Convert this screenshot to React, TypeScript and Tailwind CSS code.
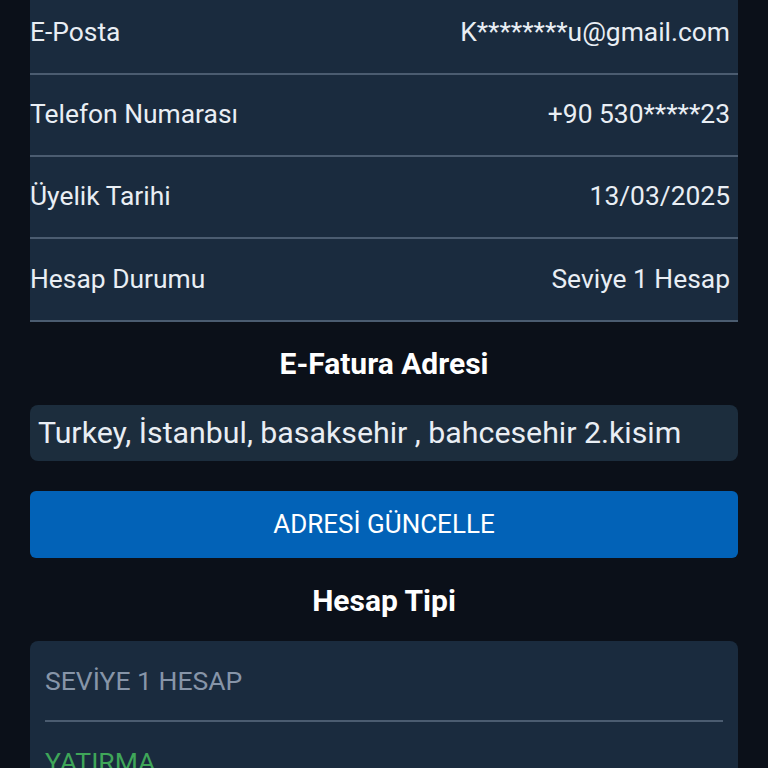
const ROWS = [
  { label: 'E-Posta', value: 'K********u@gmail.com' },
  { label: 'Telefon Numarası', value: '+90 530*****23' },
  { label: 'Üyelik Tarihi', value: '13/03/2025' },
  { label: 'Hesap Durumu', value: 'Seviye 1 Hesap' },
]

export default function App() {
  return (
    <div
      className="w-[768px] h-[768px] overflow-hidden bg-[#0b1019] px-[30px] text-white"
      style={{ fontFamily: 'Roboto, "Noto Sans", sans-serif' }}
    >
      {/* profile info */}
      <div className="-mt-[7px] bg-[#1a2b3e]">
        {ROWS.map((r) => (
          <div
            key={r.label}
            className="h-[82px] last:h-[83px] flex items-center justify-between pr-[8px] border-b-2 border-[#4b5c70] text-[26.4px] text-[#e9eef4]"
          >
            <span>{r.label}</span>
            <span>{r.value}</span>
          </div>
        ))}
      </div>

      <h2 className="mt-[22px] text-center text-[30px] font-bold leading-[40px]">E-Fatura Adresi</h2>

      <div className="mt-[21px] h-[56px] rounded-[8px] bg-[#1c2d3d] px-[8px] flex items-center text-[30.3px] text-[#e9eef4]">
        Turkey, İstanbul, basaksehir , bahcesehir 2.kisim
      </div>

      <button className="mt-[30px] w-full h-[67px] rounded-[6px] bg-[#0262b7] text-[26px] text-white">
        ADRESİ GÜNCELLE
      </button>

      <h2 className="mt-[23px] text-center text-[30px] font-bold leading-[40px]">Hesap Tipi</h2>

      {/* account type */}
      <div className="mt-[20px] rounded-[8px] bg-[#1a2b3e] px-[15px]">
        <div className="h-[81px] flex items-center border-b-2 border-[#4b5c70] text-[26.5px] text-[#8795a8]">
          SEVİYE 1 HESAP
        </div>
        <div className="h-[80px] flex items-center text-[26.5px] text-[#3fa659]">
          YATIRMA
        </div>
      </div>
    </div>
  )
}
